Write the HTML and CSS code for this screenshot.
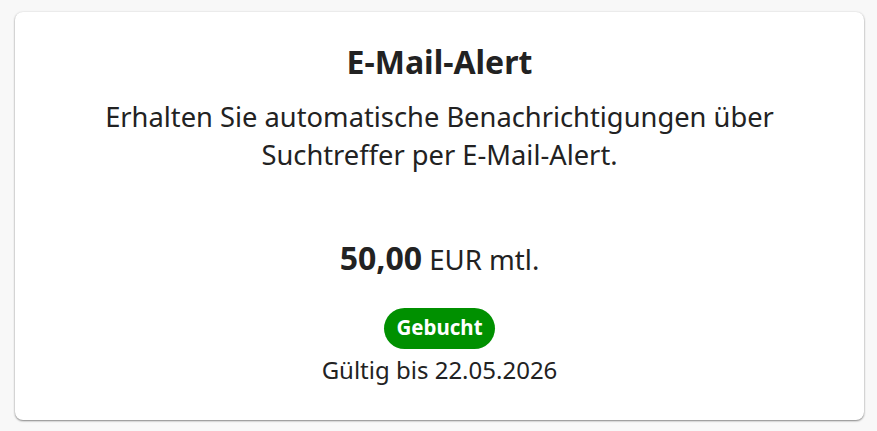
FILE: index.html
```html
<!DOCTYPE html>
<html lang="de">
<head>
<meta charset="utf-8">
<link rel="stylesheet" href="styles.css">
</head>
<body>
<div class="card">
  <h2 class="title">E-Mail-Alert</h2>
  <p class="desc">Erhalten Sie automatische Benachrichtigungen über<br>Suchtreffer per E-Mail-Alert.</p>
  <p class="price"><strong>50,00</strong> EUR mtl.</p>
  <span class="badge">Gebucht</span>
  <p class="valid">Gültig bis 22.05.2026</p>
</div>
</body>
</html>
```
FILE: styles.css
```css
html, body {
  margin: 0;
  background: #f8f8f8;
}
body {
  padding: 12px 13px 11px 15px;
  font-family: "Noto Sans", sans-serif;
  color: #222;
}
.card {
  background: #fff;
  border-radius: 8px;
  box-shadow: 0 1px 2px rgba(0,0,0,0.45), 0 0 3px rgba(0,0,0,0.08);
  height: 408px;
  box-sizing: border-box;
  display: flex;
  flex-direction: column;
  align-items: center;
  padding-top: 30px;
  text-align: center;
}
.title {
  margin: 0;
  font-size: 32px;
  line-height: 40px;
  font-weight: 700;
}
.desc {
  margin: 16px 0 0;
  font-size: 27.3px;
  line-height: 38px;
}
.price {
  margin: 64px 0 0;
  font-size: 27.6px;
  line-height: 40px;
}
.price strong {
  font-size: 32px;
}
.badge {
  margin-top: 29px;
  background: #009000;
  color: #fff;
  font-weight: 700;
  font-size: 20.5px;
  line-height: 38px;
  padding: 0 12.5px 3px;
  border-radius: 21px;
}
.valid {
  margin: 4px 0 0;
  font-size: 24px;
  line-height: 34px;
}
```
